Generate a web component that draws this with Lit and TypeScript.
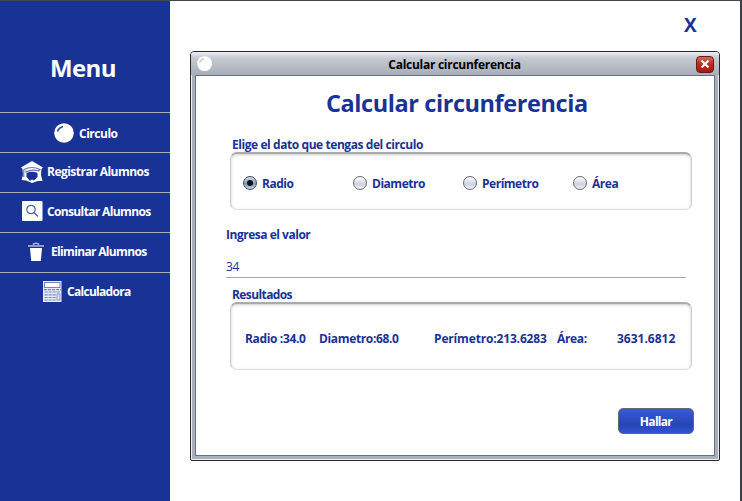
import { LitElement, html, css, svg } from "lit";
import { customElement } from "lit/decorators.js";

const ball = svg`<circle cx="10" cy="10" r="9.8" fill="#fff"/><path d="M3.500 8.500Q4.500 5 9 3.500" fill="none" stroke="currentColor" stroke-width="1.700"/>`;
const student = svg`<path d="M11 0L22 6.500L20.500 8L20 14L21.500 20L17 20L11 22L5 19.500L.5 19L2 14L1.500 8L0 6.500Z" fill="#fff"/><path d="M3 8.500Q11 4.500 19 8.500L17.500 10Q11 8 5 11V9.500" fill="none" stroke="#6478b9" stroke-width="1.200"/><path d="M2.800 8.500V16" stroke="#4a62ae" stroke-width="1"/><path d="M5.500 12Q11 9.500 16.500 12V16L13 19.500L11 18.500L9 20L5.500 16Z" fill="#193296"/>`;
const search = svg`<rect width="20.500" height="20" rx="1" fill="#fff"/><circle cx="9" cy="8.500" r="4.200" fill="none" stroke="#4a62ae" stroke-width="1.200"/><path d="M12 11.500L16 15.500" stroke="#4a62ae" stroke-width="1.300"/>`;
const trash = svg`<path d="M5.500 2.500V1Q8 -.3 10.500 1V2.500" fill="none" stroke="#a5b0d6" stroke-width="1.500"/><rect y="2" width="16" height="2" fill="#8c9ac9"/><path d="M2 5H14L12.800 18H3.200Z" fill="#fff"/>`;
const calculator = svg`<rect width="18.500" height="21" fill="#e9ecf6"/><rect x="1.500" y="1.500" width="15.500" height="5" fill="#fff" stroke="#7284bf" stroke-width="1"/><path d="M1 8.700H18M1.500 11H17M1.500 13.800H13M1.500 16.500H13M1.500 19H13" stroke="#7888c0" stroke-width="1.200" stroke-dasharray="3.200 .8"/><rect x="14" y="13" width="3" height="6" fill="#dce1f2" stroke="#7888c0" stroke-width=".8"/>`;

const items = [
  { id: "circulo", label: "Circulo", icon: ball, w: 21, h: 21 },
  { id: "registrar", label: "Registrar Alumnos", icon: student, w: 22, h: 22 },
  { id: "consultar", label: "Consultar Alumnos", icon: search, w: 20, h: 20 },
  { id: "eliminar", label: "Eliminar Alumnos", icon: trash, w: 16, h: 18 },
  { id: "calculadora", label: "Calculadora", icon: calculator, w: 19, h: 21 },
];

@customElement("app-root")
export class AppRoot extends LitElement {
  static styles = css`
    :host { display: block; width: 742px; height: 501px; overflow: hidden; box-sizing: border-box; font: bold 12px/16px "Open Sans", sans-serif; color: #193296; letter-spacing: -.48px; }
    * { box-sizing: border-box; }
    .screen { height: 501px; display: flex; background: #fff; border-top: 1px solid #44484c; border-right: 2px solid #3c3f41; }
    .menu { width: 170px; background: #193296; color: #fff; flex: none; }
    .menu h1 { margin: 0; height: 111px; padding: 50px 0 0 50px; font-size: 24px; line-height: 34px; letter-spacing: -.6px; }
    .item { height: 40px; border-top: 1px solid #a9abb0; display: flex; align-items: flex-start; white-space: nowrap; }
    .item svg { flex: none; overflow: visible; color: #2c479f; }
    .item span { margin-top: 11px; }
    .circulo { padding-left: 54px; } .circulo svg { margin: 10px 4px 0 0; } .circulo span { margin-top: 13px; }
    .registrar { padding-left: 21px; letter-spacing: -.52px; } .registrar svg { margin: 8px 4px 0 0; }
    .consultar { padding-left: 22px; letter-spacing: -.64px; } .consultar svg { margin: 8px 5px 0 0; }
    .eliminar { padding-left: 28px; letter-spacing: -.66px; } .eliminar svg { margin: 10px 7px 0 0; }
    .calculadora { padding-left: 43px; letter-spacing: -.7px; } .calculadora svg { margin: 8px 5px 0 0; }
    .desktop { flex: 1; padding: 12px 20px 0; }
    .exit { height: 38px; padding-left: 494px; font-size: 19px; line-height: 24px; }
    .dialog { width: 530px; height: 410px; border: 1px solid #25282f; border-radius: 4px 4px 2px 2px; background: #a9b0ba; padding: 0 4px 4px; box-shadow: inset 1px 1px #eceef2, inset -1px -1px #eceef2; display: flex; flex-direction: column; }
    .titlebar { height: 23px; margin: 0 -4px; padding: 1px 5px 0 6px; border-radius: 3px 3px 0 0; display: flex; align-items: center; color: #000; letter-spacing: -.27px; background: linear-gradient(#eef0f3, #c6cad2 25%, #a8aeb8); }
    .titlebar .ball { width: 16px; height: 16px; overflow: visible; color: #c5c8d0; }
    .titlebar span { flex: 1; text-align: center; padding-top: 2px; }
    .close { width: 18px; height: 17px; border: 1px solid #651b19; border-radius: 4px; background: linear-gradient(#d06a5c, #b92b1d 50%, #a51a10); display: grid; place-items: center; }
    .content { flex: 1; border: 1px solid #697180; background: #fff; padding: 12px 20px 0 34px; }
    h2 { margin: 0 0 15px 96px; height: 34px; font-size: 23.500px; line-height: 30px; white-space: nowrap; letter-spacing: -.42px; }
    .caption { margin-left: 2px; height: 15px; line-height: 15px; letter-spacing: -.43px; }
    .panel { width: 462px; height: 58px; border: 1px solid #ccc; border-top: 2px solid #aaa; border-bottom-color: #ddd; border-radius: 7px; box-shadow: inset 0 1px 3px #ccc; }
    .radios { display: grid; grid-template-columns: 110px 110px 110px 110px; padding: 22px 0 0 12px; }
    .choice { display: flex; height: 16px; gap: 5px; }
    .radio { width: 14px; height: 14px; border: 1px solid #676b73; border-radius: 50%; background: linear-gradient(#fff, #ced2dc 60%, #f0f3f8); display: grid; place-items: center; }
    .checked { border-color: #3b4d5e; background: linear-gradient(#d4e1eb, #7e9bb3 55%, #c1d8e9); }
    .checked::before { content: ""; width: 6px; height: 6px; border-radius: 50%; background: #111; }
    .field { width: 460px; margin: 17px 0 0 -4px; height: 51px; border-bottom: 1px solid #a5a9b0; }
    .value { margin-top: 16px; font-weight: normal; }
    .results-caption { margin-top: 9px; letter-spacing: -.6px; }
    .results { height: 68px; display: grid; grid-template-columns: 74px 115px 123px 60px auto; padding: 27px 0 0 14px; white-space: nowrap; letter-spacing: -.35px; }
    .results .perimeter { letter-spacing: -.16px; }
    .results .area { letter-spacing: 0; }
    .button { width: 76px; height: 26px; margin: 38px 0 0 388px; border: 1px solid #62677a; border-radius: 5px; background: linear-gradient(#3a5bd2, #2645b6 65%, #3154d2); color: #fff; text-align: center; line-height: 26px; letter-spacing: -.7px; }
  `;
  render() {
    return html`<div class="screen"><nav class="menu"><h1><span>Menu</span></h1>
      ${items.map((i) => html`<div class="item ${i.id}"><svg width=${i.w} height=${i.h}>${i.icon}</svg><span>${i.label}</span></div>`)}</nav>
      <main class="desktop"><div class="exit">X</div><section class="dialog">
        <header class="titlebar"><svg class="ball" viewBox="0 0 21 21">${ball}</svg><span>Calcular circunferencia</span><div class="close"><svg width="10" height="10"><path d="M1.500 1.500L8.500 8.500M8.500 1.500L1.500 8.500" stroke="#fff" stroke-width="2.200"/></svg></div></header>
        <div class="content"><h2>Calcular circunferencia</h2><div class="caption">Elige el dato que tengas del circulo</div>
          <div class="panel radios">${["Radio", "Diametro", "Perímetro", "Área"].map((s, n) => html`<div class="choice"><i class="radio ${n === 0 ? "checked" : ""}"></i><span>${s}</span></div>`)}</div>
          <div class="field"><div>Ingresa el valor</div><div class="value">34</div></div>
          <div class="caption results-caption">Resultados</div>
          <div class="panel results"><span>Radio :34.0</span><span>Diametro:68.0</span><span class="perimeter">Perímetro:213.6283</span><span>Área:</span><span class="area">3631.6812</span></div>
          <div class="button">Hallar</div></div>
      </section></main></div>`;
  }
}
